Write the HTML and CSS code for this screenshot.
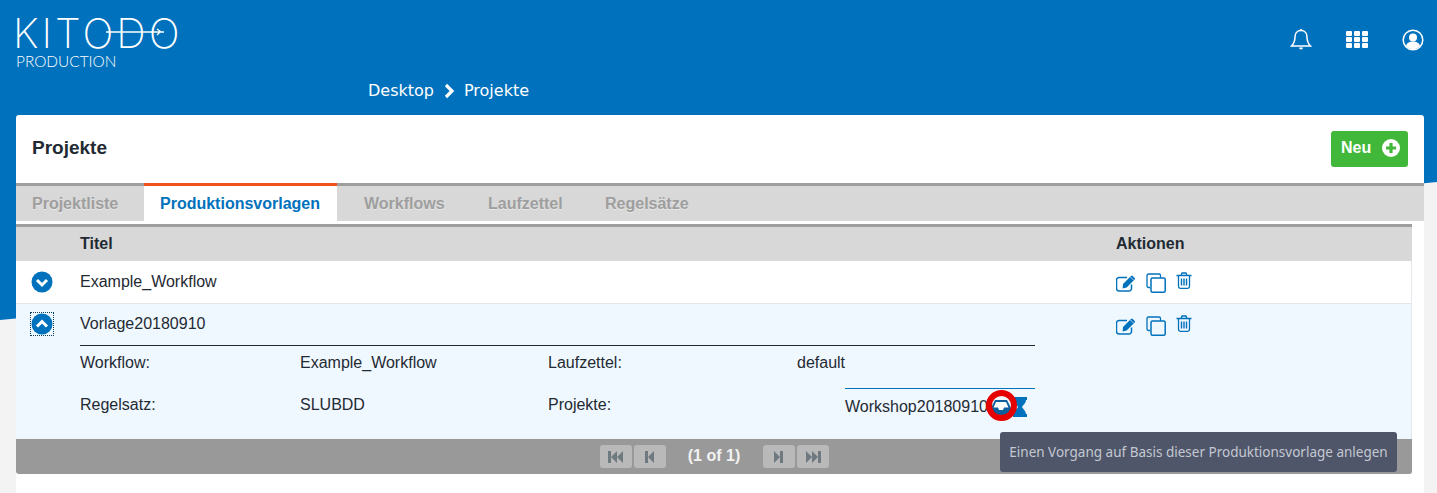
FILE: index.html
```html
<!DOCTYPE html>
<html lang="de">
<head>
  <meta charset="UTF-8">
  <title>Projekte</title>
  <link rel="stylesheet" href="styles.css">
</head>
<body>

<svg class="defs" width="0" height="0">
  <symbol id="i-edit" viewBox="0 0 20 17">
    <path d="M15.5 9.5v4a2.5 2.5 0 0 1-2.5 2.5H3a2.5 2.5 0 0 1-2.500-2.500V5A2.500 2.500 0 0 1 3 2.500h8" fill="none" stroke="currentColor" stroke-width="1.500"/>
    <path d="M7 9l8-8 1.200-.6 3 3-.6 1.200-8 8-4 1z" fill="currentColor"/>
    <path d="M14.500 2l3 3" stroke="#fff" stroke-width=".7"/>
  </symbol>
  <symbol id="i-copy" viewBox="0 0 20 20">
    <path d="M4 14.500H2.500a1.500 1.500 0 0 1-1.500-1.500V2.500A1.500 1.500 0 0 1 2.500 1H13a1.500 1.500 0 0 1 1.500 1.500V5" fill="none" stroke="currentColor" stroke-width="1.300"/>
    <rect x="5" y="5" width="14.200" height="14.200" rx="1.500" fill="none" stroke="currentColor" stroke-width="1.500"/>
  </symbol>
  <symbol id="i-trash" viewBox="0 0 16 17">
    <path d="M.5 3.500h15M5 3.500l1-2.500h4l1 2.500M2.500 3.500V14.500a1.800 1.800 0 0 0 1.800 1.800h7.400a1.800 1.800 0 0 0 1.800-1.800V3.500" fill="none" stroke="currentColor" stroke-width="1.300"/>
    <path d="M5.500 6.500v7M8 6.500v7M10.500 6.500v7" stroke="currentColor" stroke-width="1.400"/>
  </symbol>
  <symbol id="i-down" viewBox="0 0 22 22">
    <circle cx="11" cy="11" r="10.500" fill="currentColor"/>
    <path d="M6 9l5 5 5-5" fill="none" stroke="#fff" stroke-width="3"/>
  </symbol>
  <symbol id="i-up" viewBox="0 0 22 22">
    <circle cx="11" cy="11" r="10.500" fill="currentColor"/>
    <path d="M6 13.500l5-5 5 5" fill="none" stroke="#fff" stroke-width="3"/>
  </symbol>
  <symbol id="i-first" viewBox="0 0 16 12">
    <path d="M0 0h3v12H0zM3 6l6-6v12zM9 6l6-6v12z" fill="currentColor"/>
  </symbol>
  <symbol id="i-prev" viewBox="0 0 9 12">
    <path d="M0 0h3v12H0zM3 6l6-6v12z" fill="currentColor"/>
  </symbol>
  <symbol id="i-next" viewBox="0 0 9 12">
    <path d="M9 0H6v12h3zM6 6L0 0v12z" fill="currentColor"/>
  </symbol>
  <symbol id="i-last" viewBox="0 0 16 12">
    <path d="M16 0h-3v12h3zM13 6L7 0v12zM7 6L1 0v12z" fill="currentColor"/>
  </symbol>
</svg>

<div class="backdrop"></div>

<header class="topbar">
  <div class="logo">
    <div class="logo-word">KITODO
      <svg class="logo-arrow" width="60" height="12" viewBox="0 0 60 12">
        <path d="M0 6h58M51 3l4 3M51 9l3-3" fill="none" stroke="#fff" stroke-width="1.300"/>
      </svg>
    </div>
    <div class="logo-sub">PRODUCTION</div>
  </div>
  <nav class="top-icons">
    <svg width="22" height="24" viewBox="0 0 22 24">
      <path d="M11 2.500c-4 0-6 3-6 6.500 0 5-1.500 7-3.500 9h19c-2-2-3.500-4-3.500-9 0-3.500-2-6.500-6-6.500z" fill="none" stroke="#fff" stroke-width="1.500"/>
      <path d="M9.500 2.500a1.500 1.500 0 0 1 3 0M9 19.500a2 2 0 0 0 4 0z" fill="#fff"/>
    </svg>
    <svg width="22" height="17" viewBox="0 0 22 17" fill="#fff">
      <rect width="6" height="5" rx="1"/><rect x="8" width="6" height="5" rx="1"/><rect x="16" width="6" height="5" rx="1"/>
      <rect y="6" width="6" height="5" rx="1"/><rect x="8" y="6" width="6" height="5" rx="1"/><rect x="16" y="6" width="6" height="5" rx="1"/>
      <rect y="12" width="6" height="5" rx="1"/><rect x="8" y="12" width="6" height="5" rx="1"/><rect x="16" y="12" width="6" height="5" rx="1"/>
    </svg>
    <svg width="22" height="22" viewBox="0 0 22 22">
      <circle cx="11" cy="11" r="9.800" fill="none" stroke="#fff" stroke-width="1.500"/>
      <circle cx="11" cy="8.500" r="4" fill="#fff"/>
      <path d="M4 17c.5-3 3-4.500 7-4.500s6.500 1.500 7 4.500c-2 2-4 3.200-7 3.200S6 19 4 17z" fill="#fff"/>
    </svg>
  </nav>
</header>

<div class="breadcrumb">
  <span>Desktop</span>
  <svg width="12" height="16" viewBox="0 0 12 16"><path d="M3 2l6 6-6 6" fill="none" stroke="#fff" stroke-width="3.200"/></svg>
  <span>Projekte</span>
</div>

<main class="card">
  <div class="card-head">
    <h1 class="card-title">Projekte</h1>
    <button class="btn-new">Neu
      <svg width="18" height="18" viewBox="0 0 18 18">
        <circle cx="9" cy="9" r="9" fill="#fff"/>
        <path d="M9 4v10M4 9h10" stroke="#42b83a" stroke-width="3.200"/>
      </svg>
    </button>
  </div>

  <div class="tabs">
    <a class="tab tab-first">Projektliste</a>
    <a class="tab active">Produktionsvorlagen</a>
    <a class="tab tab-workflows">Workflows</a>
    <a class="tab tab-sheets">Laufzettel</a>
    <a class="tab">Regelsätze</a>
  </div>

  <div class="table-wrap">
    <div class="table">
      <div class="thead">
        <span class="col-title">Titel</span>
        <span class="col-actions">Aktionen</span>
      </div>

      <div class="row">
        <svg class="toggle"><use href="#i-down"/></svg>
        <span class="col-title">Example_Workflow</span>
        <span class="col-actions icons">
          <svg class="ic-edit"><use href="#i-edit"/></svg>
          <svg class="ic-copy"><use href="#i-copy"/></svg>
          <svg class="ic-trash"><use href="#i-trash"/></svg>
        </span>
      </div>

      <div class="row open">
        <div class="row-main">
          <span class="toggle-focus"><svg class="toggle"><use href="#i-up"/></svg></span>
          <span class="col-title">Vorlage20180910</span>
          <span class="col-actions icons">
            <svg class="ic-edit"><use href="#i-edit"/></svg>
            <svg class="ic-copy"><use href="#i-copy"/></svg>
            <svg class="ic-trash"><use href="#i-trash"/></svg>
          </span>
        </div>
        <div class="details">
          <span>Workflow:</span>
          <span>Example_Workflow</span>
          <span>Laufzettel:</span>
          <span>default</span>
          <span>Regelsatz:</span>
          <span>SLUBDD</span>
          <span>Projekte:</span>
          <div class="project-cell">
            <span>Workshop20180910</span>
            <span class="marked">
              <svg width="20" height="16" viewBox="0 0 20 16">
                <path d="M4 1h12l4 8v5a2 2 0 0 1-2 2H2a2 2 0 0 1-2-2V9z" fill="#0b5f9c"/>
                <path d="M5 3h10l2.500 5.500H13L12 11H8L7 8.500H2.500z" fill="#fff"/>
              </svg>
              <svg class="hourglass" width="14" height="20" viewBox="0 0 14 20">
                <path d="M0 0h14v3h-1c0 3-3 5-4 7 1 2 4 4 4 7h1v3H0v-3h1c0-3 3-5 4-7-1-2-4-4-4-7H0z" fill="#0071bc"/>
              </svg>
              <i class="ring"></i>
            </span>
          </div>
        </div>
      </div>

      <div class="pager">
        <span class="pg-btn"><svg width="16" height="12"><use href="#i-first"/></svg></span>
        <span class="pg-btn"><svg width="9" height="12"><use href="#i-prev"/></svg></span>
        <span class="pg-text">(1 of 1)</span>
        <span class="pg-btn"><svg width="9" height="12"><use href="#i-next"/></svg></span>
        <span class="pg-btn"><svg width="16" height="12"><use href="#i-last"/></svg></span>
      </div>
    </div>
    <div class="tooltip">Einen Vorgang auf Basis dieser Produktionsvorlage anlegen</div>
  </div>
</main>

</body>
</html>
```

FILE: styles.css
```css
* {
  box-sizing: border-box;
}

html, body {
  height: 493px;
  overflow: hidden;
}

body {
  margin: 0;
  background: #f3f3f3;
  font-family: "Liberation Sans", Arial, sans-serif;
  font-size: 16px;
  color: #1f2a33;
  position: relative;
}

.defs {
  position: absolute;
}

.backdrop {
  position: absolute;
  top: 0;
  left: 0;
  right: 0;
  height: 320px;
  background: #0071bc;
  clip-path: polygon(0 0, 100% 0, 100% 182px, 0 100%);
}

.topbar {
  position: relative;
  display: flex;
  justify-content: space-between;
  height: 78px;
  padding: 13px 13px 0 16px;
  color: #fff;
}

.logo-word {
  position: relative;
  font-family: Inter, sans-serif;
  font-weight: 200;
  font-size: 41px;
  line-height: 40px;
  letter-spacing: 3px;
  height: 40px;
  margin-left: -3px;
}

.logo-arrow {
  position: absolute;
  left: 93px;
  top: 13px;
}

.logo-sub {
  font-family: Lato, sans-serif;
  font-weight: 300;
  font-size: 15.4px;
  line-height: 14px;
  margin-top: 1px;
}

.top-icons {
  display: flex;
  align-items: center;
  gap: 34px;
  padding: 0 0 12px 0;
}

.breadcrumb {
  position: relative;
  display: flex;
  align-items: center;
  gap: 9px;
  height: 25px;
  padding-left: 368px;
  font-family: "DejaVu Sans", sans-serif;
  font-size: 16px;
  color: #fff;
}

.card {
  position: relative;
  margin: 12px 13px 0 16px;
  background: #fff;
  border-radius: 3px 3px 0 0;
  padding-bottom: 19px;
}

.card-head {
  display: flex;
  justify-content: space-between;
  align-items: center;
  height: 68px;
  padding: 0 16px;
}

.card-title {
  margin: 0 0 2px;
  font-size: 19px;
  font-weight: bold;
}

.btn-new {
  display: flex;
  align-items: center;
  gap: 11px;
  width: 77px;
  height: 36px;
  padding: 0 0 2px 10px;
  border: none;
  border-radius: 3px;
  background: #42b83a;
  color: #fff;
  font: bold 16px "Liberation Sans", sans-serif;
}

.tabs {
  display: flex;
  height: 38px;
  border-top: 3px solid #9e9e9e;
  background: #d8d8d8;
}

.tab {
  display: block;
  height: 35px;
  line-height: 35px;
  padding-left: 16px;
  font-weight: bold;
  color: #9e9e9e;
  text-shadow: 0 1px 0 rgba(255, 255, 255, .4);
}

.tab-first {
  width: 128px;
}

.tab-workflows {
  width: 127px;
  padding-left: 27px;
}

.tab-sheets {
  width: 125px;
  padding-left: 24px;
}

.tab.active {
  width: 193px;
  margin-top: -3px;
  height: 38px;
  border-top: 3px solid #f4511e;
  background: #fff;
  color: #0071bc;
  text-shadow: none;
}

.table-wrap {
  padding-top: 3px;
}

.table {
  width: 1396px;
  border-right: 1px solid #e4e8ec;
}

.thead {
  display: flex;
  height: 37px;
  line-height: 34px;
  margin-right: -1px;
  border-top: 3px solid #9e9e9e;
  background: #d8d8d8;
  font-weight: bold;
}

.col-title {
  width: 1036px;
  margin-left: 64px;
  flex: none;
}

.row {
  display: flex;
  position: relative;
  height: 43px;
  line-height: 42px;
  border-bottom: 1px solid #e2e6ea;
  padding-left: 15px;
}

.row .col-title {
  margin-left: 27px;
  width: 1036px;
}

.row.open {
  display: block;
  height: 135px;
  border-bottom: none;
  background: #f0f8ff;
}

.row-main {
  display: flex;
  height: 41px;
  line-height: 40px;
}

.toggle {
  flex: none;
  width: 22px;
  height: 22px;
  margin: 10px 0 0 0;
  color: #0071bc;
  display: block;
}

.toggle-focus {
  flex: none;
  width: 22px;
  height: 22px;
  margin-top: 9px;
  outline: 1px dotted #0b3f66;
  outline-offset: 0;
}

.toggle-focus .toggle {
  margin: 0;
}

.icons {
  display: flex;
  align-items: flex-start;
  gap: 10px;
  color: #0071bc;
  padding-top: 11px;
}

.ic-edit {
  width: 20px;
  height: 17px;
  margin-top: 3px;
}

.ic-copy {
  width: 20px;
  height: 20px;
  margin-top: 1px;
}

.ic-trash {
  width: 16px;
  height: 17px;
}

.details {
  display: grid;
  grid-template-columns: 220px 248px 249px 238px;
  grid-template-rows: 42px 42px;
  width: 955px;
  margin-left: 49px;
  border-top: 1px solid #1f2a33;
  line-height: 34px;
}

.project-cell {
  display: flex;
  align-items: center;
  height: 36px;
  margin: 0 0 0 48px;
  border-top: 1px solid #0071bc;
  line-height: 1;
}

.marked {
  position: relative;
  display: flex;
  align-items: center;
  margin-left: 3px;
}

.hourglass {
  margin-left: 2px;
}

.ring {
  position: absolute;
  left: -5px;
  top: -7px;
  width: 31px;
  height: 31px;
  border: 6px solid #e60000;
  border-radius: 50%;
}

.pager {
  display: flex;
  align-items: center;
  justify-content: center;
  gap: 2px;
  height: 35px;
  background: #999;
  border-radius: 0 0 3px 3px;
  margin-right: -1px;
}

.pg-btn {
  display: flex;
  align-items: center;
  justify-content: center;
  width: 32px;
  height: 23px;
  border-radius: 3px;
  background: #b9b9b9;
  color: #6f7a80;
}

.pg-text {
  width: 97px;
  margin: 0 -2px 1px;
  text-align: center;
  font-weight: bold;
  color: #f2f2f2;
}

.tooltip {
  position: absolute;
  left: 984px;
  top: 317px;
  width: 397px;
  height: 40px;
  line-height: 40px;
  text-align: center;
  border-radius: 3px;
  background: #505669;
  color: #c3c8d2;
  font-family: "Noto Sans", sans-serif;
  font-size: 13.5px;
}
```
